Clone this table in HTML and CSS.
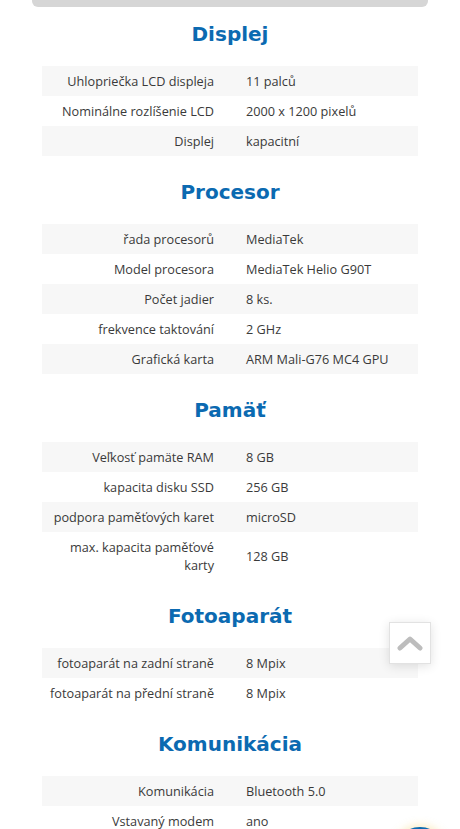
FILE: index.html
```html
<!DOCTYPE html>
<html lang="sk">
<head>
    <meta charset="UTF-8">
    <meta name="viewport" content="width=device-width, initial-scale=1.0">
    <title>Parametre</title>
    <link rel="stylesheet" href="styles.css">
</head>
<body>
    <div class="page">
        <div class="top-bar"></div>

        <div class="specs">
            <h2>Displej</h2>
            <table>
                <tr><th>Uhlopriečka LCD displeja</th><td>11 palců</td></tr>
                <tr><th>Nominálne rozlíšenie LCD</th><td>2000 x 1200 pixelů</td></tr>
                <tr><th>Displej</th><td>kapacitní</td></tr>
            </table>

            <h2>Procesor</h2>
            <table>
                <tr><th>řada procesorů</th><td>MediaTek</td></tr>
                <tr><th>Model procesora</th><td>MediaTek Helio G90T</td></tr>
                <tr><th>Počet jadier</th><td>8 ks.</td></tr>
                <tr><th>frekvence taktování</th><td>2 GHz</td></tr>
                <tr><th>Grafická karta</th><td>ARM Mali-G76 MC4 GPU</td></tr>
            </table>

            <h2>Pamäť</h2>
            <table>
                <tr><th>Veľkosť pamäte RAM</th><td>8 GB</td></tr>
                <tr><th>kapacita disku SSD</th><td>256 GB</td></tr>
                <tr><th>podpora paměťových karet</th><td>microSD</td></tr>
                <tr><th>max. kapacita paměťové karty</th><td>128 GB</td></tr>
            </table>

            <h2>Fotoaparát</h2>
            <table>
                <tr><th>fotoaparát na zadní straně</th><td>8 Mpix</td></tr>
                <tr><th>fotoaparát na přední straně</th><td>8 Mpix</td></tr>
            </table>

            <h2>Komunikácia</h2>
            <table>
                <tr><th>Komunikácia</th><td>Bluetooth 5.0</td></tr>
                <tr><th>Vstavaný modem</th><td>ano</td></tr>
            </table>
        </div>
    </div>

    <a href="#" class="to-top" aria-label="Hore">
        <svg width="26" height="16" viewBox="0 0 26 16"><path d="M3 13 L13 4 L23 13" fill="none" stroke="#bdbdbd" stroke-width="5" stroke-linecap="round" stroke-linejoin="round"/></svg>
    </a>
    <div class="chat-bubble"></div>
</body>
</html>
```

FILE: styles.css
```css
body { margin: 0; background: #fff; font-family: "Open Sans", "Noto Sans", Arial, sans-serif; color: #3a3a3a; overflow: hidden; }
.page { padding: 0 32px; }
.top-bar { height: 7px; background: #d6d6d6; border-radius: 0 0 6px 6px; }
.specs { padding: 0 10px; }
h2 { margin: 22px 0 18px; font-family: "DejaVu Sans", sans-serif; font-weight: 700; font-size: 20px; line-height: 28px; color: #0b6ab1; text-align: center; }
h2:first-child { margin-top: 13px; }
table { width: 100%; border-collapse: collapse; table-layout: fixed; font-size: 12.7px; line-height: 18px; }
tr:nth-child(odd) { background: #f7f7f7; }
th, td { padding: 6px 16px; vertical-align: middle; }
th { text-align: right; font-weight: 400; padding-left: 4px; }
td { text-align: left; }
.to-top { position: fixed; left: 389px; top: 622px; width: 40px; height: 40px; background: #fff; border: 1px solid #e2e2e2; box-shadow: 0 2px 10px rgba(0,0,0,0.12); display: flex; align-items: center; justify-content: center; }
.chat-bubble { position: fixed; left: 392px; top: 827px; width: 56px; height: 56px; border-radius: 50%; background: #0b6ab1; box-shadow: 0 -2px 8px rgba(240,200,80,0.35); }
```
